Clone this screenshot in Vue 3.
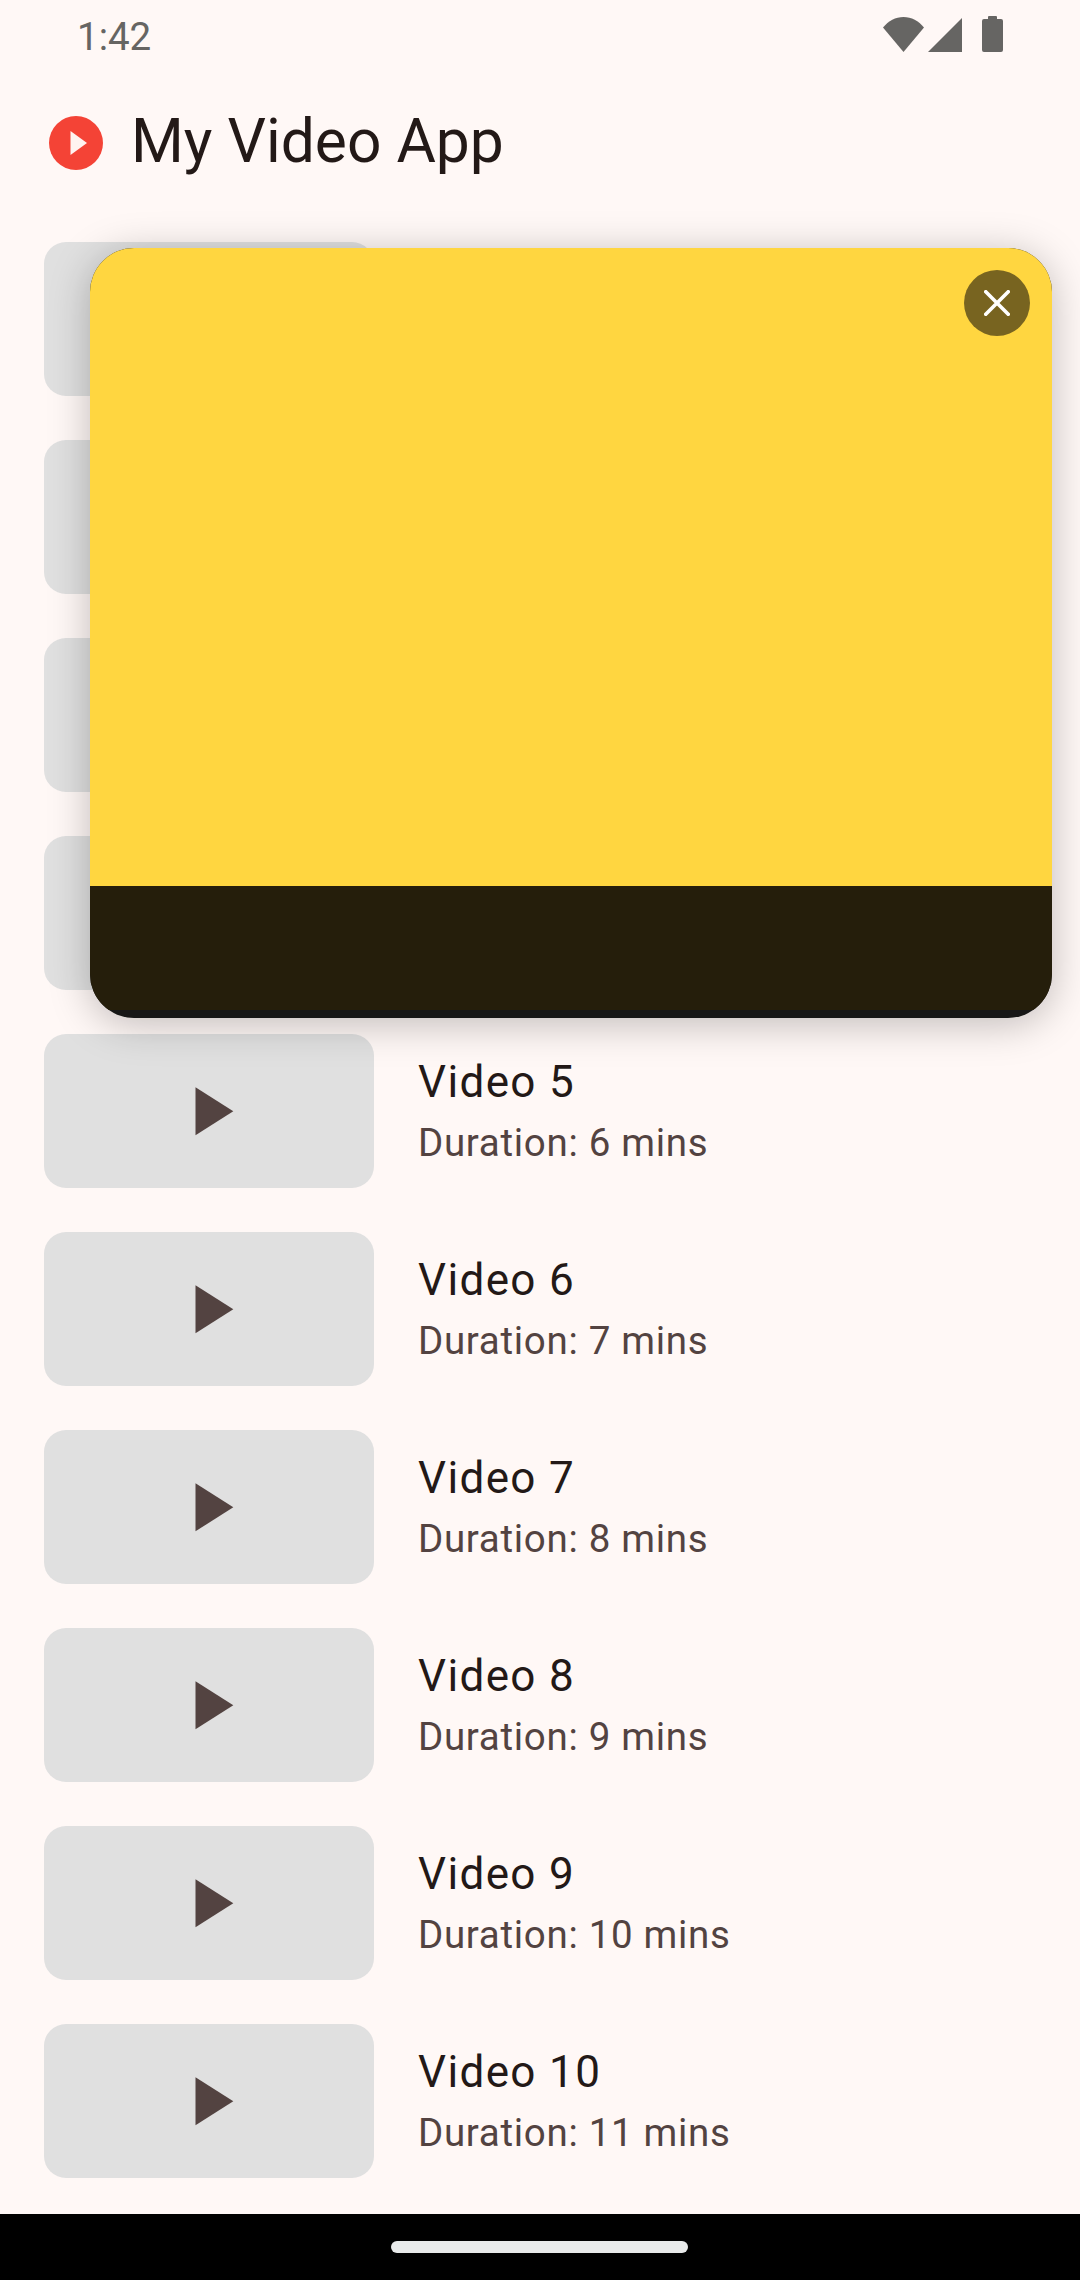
<template>
  <div class="page">
    <div class="status-bar">
      <span class="clock">1:42</span>
      <div class="status-icons">
        <svg class="wifi" viewBox="0 0 41 35" aria-hidden="true">
          <path d="M0 10.500C5.500 4 12.500 0 20.500 0S35.500 4 41 10.500L20.500 35z" />
        </svg>
        <svg class="signal" viewBox="0 0 34 34" aria-hidden="true">
          <path d="M34 0v34H0z" />
        </svg>
        <svg class="battery" viewBox="0 0 21 36" aria-hidden="true">
          <path d="M6 3V1a1 1 0 0 1 1-1h7a1 1 0 0 1 1 1v2h4a2 2 0 0 1 2 2v29a2 2 0 0 1-2 2H2a2 2 0 0 1-2-2V5a2 2 0 0 1 2-2z" />
        </svg>
      </div>
    </div>

    <header class="app-bar">
      <svg class="logo" viewBox="0 0 54 54" aria-hidden="true">
        <circle cx="27" cy="27" r="27" fill="#f44336" />
        <path d="M21.500 15v24L38 27z" fill="#fff3f0" />
      </svg>
      <h1 class="title">My Video App</h1>
    </header>

    <ul class="list" role="list">
      <li v-for="video in videos" :key="video.id" class="row">
        <div class="thumb">
          <svg class="play" viewBox="0 0 24 24" aria-hidden="true">
            <path d="M8 5v14l11-7z" />
          </svg>
        </div>
        <div class="info">
          <p class="name">{{ video.name }}</p>
          <p class="duration">{{ video.duration }}</p>
        </div>
      </li>
    </ul>

    <div class="nav-bar">
      <div class="nav-pill"></div>
    </div>

    <div class="player">
      <div class="player-video">
        <button class="close" type="button" aria-label="Close">
          <svg viewBox="0 0 26 26" aria-hidden="true">
            <path d="M0.500 0.500l25 25M25.500 0.500l-25 25" />
          </svg>
        </button>
      </div>
      <div class="player-controls"></div>
    </div>
  </div>
</template>

<script setup>
const videos = Array.from({ length: 10 }, (_, i) => ({
  id: i + 1,
  name: `Video ${i + 1}`,
  duration: `Duration: ${i + 2} mins`,
}));
</script>

<style>
html,
body {
  margin: 0;
  background: #fff8f6;
}
</style>

<style scoped>
.page {
  position: relative;
  display: flex;
  flex-direction: column;
  width: 1080px;
  height: 2280px;
  overflow: hidden;
  background: #fff8f6;
  font-family: Roboto, "Liberation Sans", sans-serif;
}

.status-bar {
  display: flex;
  align-items: flex-start;
  justify-content: space-between;
  height: 66px;
  padding: 0 77px;
  box-sizing: border-box;
}

.clock {
  margin-top: 14px;
  font-size: 38.500px;
  line-height: 45px;
  color: #666563;
}

.status-icons {
  display: flex;
  align-items: flex-start;
  margin-top: 16px;
}

.status-icons svg {
  display: block;
  fill: #666563;
}

.wifi {
  width: 41px;
  height: 35px;
  margin-top: 1px;
}

.signal {
  width: 34px;
  height: 34px;
  margin-top: 2px;
  margin-left: 4px;
}

.battery {
  width: 21px;
  height: 36px;
  margin-left: 20px;
}

.app-bar {
  display: flex;
  align-items: center;
  gap: 28px;
  height: 154px;
  padding-left: 49px;
}

.logo {
  width: 54px;
  height: 54px;
  flex: none;
}

.title {
  margin: 0 0 4px;
  font-size: 60.500px;
  font-weight: 400;
  line-height: 77px;
  color: #231917;
}

.list {
  flex: 1;
  display: flex;
  flex-direction: column;
  gap: 44px;
  margin: 0;
  padding: 22px 44px 0;
  list-style: none;
  overflow: hidden;
}

.row {
  display: flex;
  align-items: center;
  gap: 44px;
  flex: none;
  height: 154px;
}

.thumb {
  display: flex;
  align-items: center;
  justify-content: center;
  flex: none;
  width: 330px;
  height: 154px;
  border-radius: 22px;
  background: #e0e0e0;
}

.play {
  display: block;
  width: 82.500px;
  height: 82.500px;
  fill: #534341;
}

.info {
  padding-bottom: 3px;
}

.name {
  margin: 0;
  font-size: 44px;
  line-height: 66px;
  letter-spacing: 1.375px;
  color: #231917;
}

.duration {
  margin: 0;
  font-size: 38.500px;
  line-height: 55px;
  letter-spacing: 0.690px;
  color: #534341;
}

.nav-bar {
  display: flex;
  justify-content: center;
  flex: none;
  height: 66px;
  background: #000;
}

.nav-pill {
  width: 297px;
  height: 12px;
  margin: 27px 1px 0 0;
  border-radius: 6px;
  background: #e8eaea;
}

.player {
  position: absolute;
  top: 248px;
  left: 90px;
  display: flex;
  flex-direction: column;
  width: 962px;
  height: 770px;
  overflow: hidden;
  border-radius: 44px;
  background: #171717;
  box-shadow: 0 6px 40px rgba(0, 0, 0, 0.25);
}

.player-video {
  position: relative;
  height: 638px;
  background: #ffd640;
}

.player-controls {
  height: 124px;
  background: #251e0b;
}

.close {
  position: absolute;
  top: 22px;
  right: 22px;
  display: flex;
  align-items: center;
  justify-content: center;
  width: 66px;
  height: 66px;
  padding: 0;
  border: none;
  border-radius: 50%;
  background: #786420;
}

.close svg {
  display: block;
  width: 26px;
  height: 26px;
  fill: none;
  stroke: #fff;
  stroke-width: 3.600;
}
</style>
